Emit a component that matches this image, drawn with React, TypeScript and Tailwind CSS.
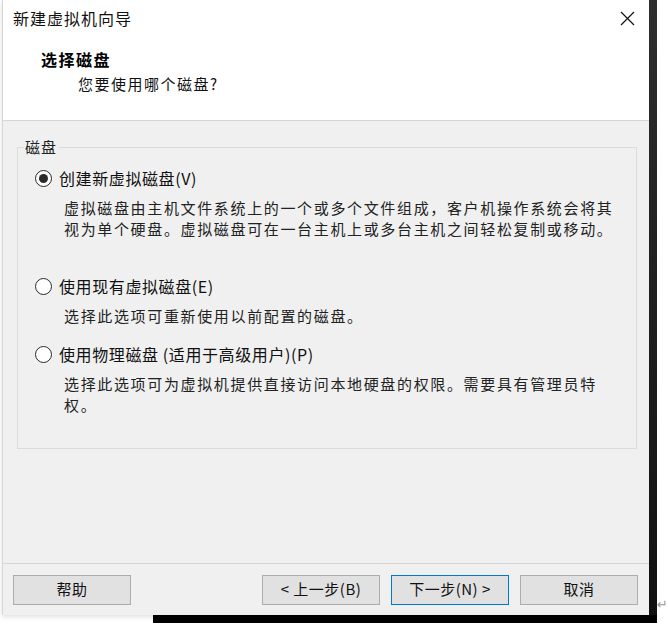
import React from 'react';

const font = "font-['Noto_Sans_CJK_SC','Microsoft_YaHei',sans-serif]";

function Radio({ checked }: { checked?: boolean }) {
  return (
    <span className="w-[17px] h-[17px] rounded-full border-[1.5px] border-[#2a2a2a] bg-white flex items-center justify-center shrink-0">
      {checked && <span className="w-[9px] h-[9px] rounded-full bg-[#2a2a2a]" />}
    </span>
  );
}

function Option({ label, checked, lines, gapTop }: { label: string; checked?: boolean; lines: string[]; gapTop: string }) {
  return (
    <div className={gapTop}>
      <div className="flex items-center gap-[7px] h-[22px] pl-[17px]">
        <Radio checked={checked} />
        <span className="text-[16px] leading-[22px] tracking-[0.6px] text-[#111]">{label}</span>
      </div>
      <div className="mt-[8px] pl-[46px] text-[15px] leading-[21px] tracking-[1.65px] text-[#222]">
        {lines.map((l) => (
          <div key={l} className="whitespace-nowrap">{l}</div>
        ))}
      </div>
    </div>
  );
}

function Button({ children, primary }: { children: React.ReactNode; primary?: boolean }) {
  return (
    <button
      className={`w-[118px] h-[30px] text-[15px] tracking-[0.5px] text-[#111] bg-[#e1e1e1] border ${primary ? 'border-[#0078d7]' : 'border-[#adadad]'} flex items-center justify-center`}
    >
      {children}
    </button>
  );
}

export default function App() {
  return (
    <div className={`w-[668px] h-[629px] bg-white overflow-hidden ${font}`}>
      <div className="flex pl-[2px]">
        {/* Dialog */}
        <div className="w-[647px] h-[615px] flex flex-col border-l border-[#d6d6d6] shadow-[0_2px_5px_rgba(0,0,0,0.12)]">
          {/* Header */}
          <div className="h-[121px] bg-white border-b border-[#d5d5d5] shrink-0">
            <div className="h-[36px] flex items-center justify-between pl-[10px] pr-[14px]">
              <span className="text-[16px] tracking-[1px] text-[#111]">新建虚拟机向导</span>
              <svg width="15" height="15" viewBox="0 0 15 15">
                <path d="M1 1 L14 14 M14 1 L1 14" stroke="#111" strokeWidth="1.2" fill="none" />
              </svg>
            </div>
            <div className="mt-[13px] pl-[38px] text-[16px] leading-[20px] font-bold tracking-[1.5px] text-black">选择磁盘</div>
            <div className="mt-[5px] pl-[75px] text-[15px] leading-[20px] tracking-[1.5px] text-[#111]">您要使用哪个磁盘?</div>
          </div>

          {/* Body */}
          <div className="flex-1 bg-[#f0f0f0] pl-[14px] pr-[12px] pt-[16px]">
            <fieldset className="h-[312px] border border-[#dcdcdc] pt-[10px]">
              <legend className="ml-[6px] px-px text-[15px] leading-[20px] tracking-[1px] text-[#222]">磁盘</legend>
              <Option
                checked
                gapTop=""
                label="创建新虚拟磁盘(V)"
                lines={[
                  '虚拟磁盘由主机文件系统上的一个或多个文件组成，客户机操作系统会将其',
                  '视为单个硬盘。虚拟磁盘可在一台主机上或多台主机之间轻松复制或移动。',
                ]}
              />
              <Option gapTop="mt-[36px]" label="使用现有虚拟磁盘(E)" lines={['选择此选项可重新使用以前配置的磁盘。']} />
              <Option
                gapTop="mt-[17px]"
                label="使用物理磁盘 (适用于高级用户)(P)"
                lines={['选择此选项可为虚拟机提供直接访问本地硬盘的权限。需要具有管理员特', '权。']}
              />
            </fieldset>
          </div>

          {/* Footer */}
          <div className="h-[52px] bg-[#f0f0f0] border-t border-[#d5d5d5] flex items-center pl-[10px] pr-[11px] shrink-0">
            <Button>帮助</Button>
            <div className="flex-1" />
            <div className="flex gap-[11px]">
              <Button>&lt; 上一步(B)</Button>
              <Button primary>下一步(N) &gt;</Button>
              <Button>取消</Button>
            </div>
          </div>
        </div>

        {/* Window behind */}
        <div className="w-[8px] h-[615px] bg-gradient-to-b from-[#2e2e2e] to-[#111]" />
        <div className="flex-1 flex items-end justify-center pb-[2px]">
          <span className="text-[13px] leading-[16px] text-[#999] font-['DejaVu_Sans',sans-serif]">↵</span>
        </div>
      </div>
      <div className="flex">
        <div className="w-[153px] h-[8px]" />
        <div className="w-[504px] h-[8px] bg-black" />
      </div>
    </div>
  );
}
